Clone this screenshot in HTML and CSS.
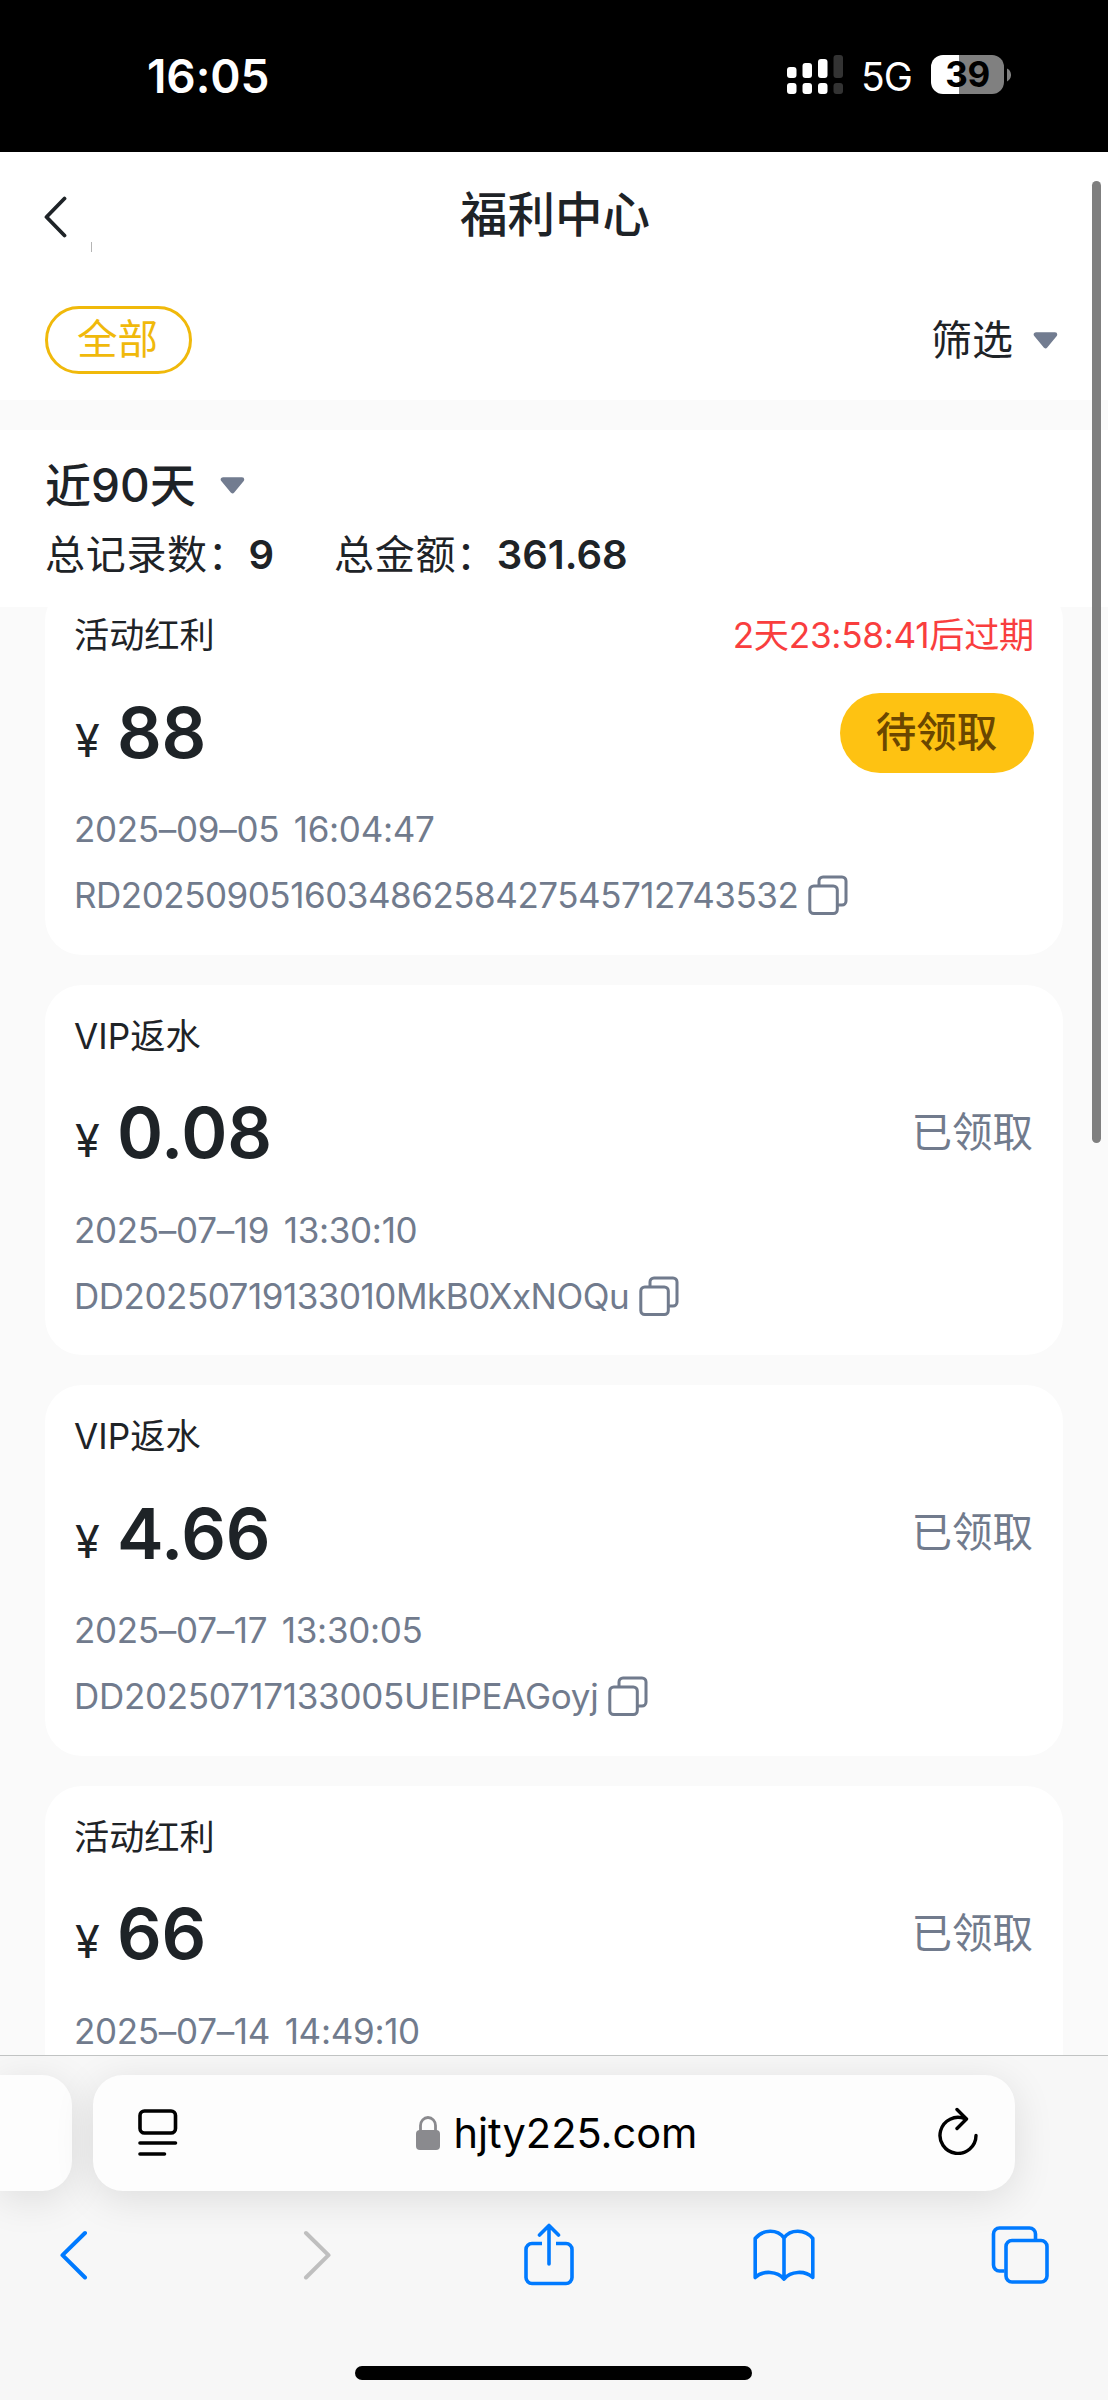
FILE: index.html
```html
<!DOCTYPE html>
<html lang="zh-CN">
<head>
<meta charset="utf-8">
<title>福利中心</title>
<link rel="stylesheet" href="styles.css">
</head>
<body>
<svg class="defs" width="0" height="0">
  <symbol id="copy" viewBox="0 0 40 40">
    <path d="M11 11V6a4 4 0 0 1 4-4h19a4 4 0 0 1 4 4v20a4 4 0 0 1-4 4h-4" fill="none" stroke="currentColor" stroke-width="3"/>
    <rect x="1.8" y="11" width="27.5" height="27.5" rx="4" fill="none" stroke="currentColor" stroke-width="3"/>
  </symbol>
  <symbol id="caret" viewBox="0 0 25 17">
    <path d="M3 2.5h19L12.5 14z" fill="currentColor" stroke="currentColor" stroke-width="4.5" stroke-linejoin="round"/>
  </symbol>
</svg>
<div class="screen">
  <header class="status">
    <span class="clock">16:05</span>
    <div class="indicators">
      <svg class="signal" width="56" height="40" viewBox="0 0 56 40">
        <g fill="#fff">
          <rect x="0" y="12" width="9.5" height="11" rx="3"/><rect x="15.5" y="8" width="9.5" height="15" rx="3"/><rect x="31" y="4" width="9.5" height="19" rx="3"/>
          <rect x="0" y="28" width="9.5" height="11" rx="3"/><rect x="15.5" y="28" width="9.5" height="11" rx="3"/><rect x="31" y="28" width="9.5" height="11" rx="3"/>
        </g>
        <g fill="#333"><rect x="46.5" y="0" width="9.5" height="23" rx="3"/><rect x="46.5" y="28" width="9.5" height="11" rx="3"/></g>
      </svg>
      <span class="network">5G</span>
      <div class="battery"><span class="level">39</span></div>
      <svg class="nub" width="4" height="14" viewBox="0 0 4 14"><path d="M0 0.5C5.4 3 5.4 11 0 13.5z" fill="#808080"/></svg>
    </div>
  </header>

  <main class="page">
    <div class="titlebar">
      <svg class="back" width="24" height="42" viewBox="0 0 24 42"><path d="M20.5 2.5L2.5 21l18 18.5" fill="none" stroke="#1e2327" stroke-width="3.8" stroke-linecap="round" stroke-linejoin="round"/></svg>
      <i class="tick"></i>
      <h1>福利中心</h1>
    </div>
    <div class="tabs">
      <button class="chip">全部</button>
      <div class="filter"><span>筛选</span><svg class="caret" width="25" height="17"><use href="#caret"/></svg></div>
    </div>
    <section class="summary">
      <div class="range"><span>近90天</span><svg class="caret" width="25" height="17"><use href="#caret"/></svg></div>
      <div class="totals"><span class="count">总记录数：<b>9</b></span><span class="sum">总金额：<b>361.68</b></span></div>
    </section>
    <section class="list">
      <article class="card">
        <div class="head"><span>活动红利</span><span class="expire">2天23:58:41后过期</span></div>
        <div class="amount"><span class="money"><span class="yen">¥</span><strong>88</strong></span><button class="claim">待领取</button></div>
        <div class="time">2025–09–05 16:04:47</div>
        <div class="order"><span>RD202509051603486258427545712743532</span><svg width="40" height="40"><use href="#copy"/></svg></div>
      </article>
      <article class="card">
        <div class="head"><span>VIP返水</span></div>
        <div class="amount"><span class="money"><span class="yen">¥</span><strong>0.08</strong></span><span class="done">已领取</span></div>
        <div class="time">2025–07–19 13:30:10</div>
        <div class="order"><span>DD20250719133010MkB0XxNOQu</span><svg width="40" height="40"><use href="#copy"/></svg></div>
      </article>
      <article class="card">
        <div class="head"><span>VIP返水</span></div>
        <div class="amount"><span class="money"><span class="yen">¥</span><strong>4.66</strong></span><span class="done">已领取</span></div>
        <div class="time">2025–07–17 13:30:05</div>
        <div class="order order-wide"><span>DD20250717133005UEIPEAGoyj</span><svg width="40" height="40"><use href="#copy"/></svg></div>
      </article>
      <article class="card">
        <div class="head"><span>活动红利</span></div>
        <div class="amount"><span class="money"><span class="yen">¥</span><strong>66</strong></span><span class="done">已领取</span></div>
        <div class="time">2025–07–14 14:49:10</div>
      </article>
    </section>
    <i class="scrollbar"></i>
  </main>

  <footer class="browser">
    <div class="address-row">
      <div class="prev-tab"></div>
      <div class="address">
        <svg width="40" height="48" viewBox="0 0 40 48" fill="none" stroke="#000" stroke-width="3.6" stroke-linecap="round"><rect x="2" y="2" width="35.5" height="22" rx="4.5"/><path d="M2 34h35.5M2 45h24.5"/></svg>
        <div class="host">
          <svg width="24" height="34" viewBox="0 0 24 34"><path d="M4.5 16V9.5a7.5 8 0 0 1 15 0V16" fill="none" stroke="#8a8a8e" stroke-width="2.8"/><rect x="0" y="14" width="24" height="20" rx="4" fill="#8a8a8e"/></svg>
          <span>hjty225.com</span>
        </div>
        <svg class="reload" width="40" height="48" viewBox="0 0 40 48" fill="none" stroke="#000" stroke-width="3.4" stroke-linecap="round" stroke-linejoin="round"><path d="M38 28.500A18 18 0 1 1 27 11.800M19 2.500l9.500 9.500-9.500 9.500"/></svg>
      </div>
    </div>
    <nav class="tools">
      <svg class="prev" width="28" height="50" viewBox="0 0 28 50"><path d="M25 3L2.5 25.2 25 47.5" fill="none" stroke="#007aff" stroke-width="4" stroke-linecap="round" stroke-linejoin="round"/></svg>
      <svg class="forward" width="28" height="50" viewBox="0 0 28 50"><path d="M3 3l22.500 22.200L3 47.500" fill="none" stroke="#bfbfbf" stroke-width="4" stroke-linecap="round" stroke-linejoin="round"/></svg>
      <svg class="share" width="50" height="64" viewBox="0 0 50 64" fill="none" stroke="#007aff" stroke-width="3.6"><path d="M18 20.500H8a6 6 0 0 0-6 6v28a6 6 0 0 0 6 6h34a6 6 0 0 0 6-6v-28a6 6 0 0 0-6-6H32"/><path d="M25 41V3M15.500 12L25 2.500l9.500 9.500" stroke-linecap="round" stroke-linejoin="round"/></svg>
      <svg width="62" height="54" viewBox="0 0 62 54" fill="none" stroke="#007aff" stroke-width="3.6" stroke-linecap="round" stroke-linejoin="round"><path d="M31 10v41C24.500 43 10 42 2.200 49.500V10.500C10 1 24.500 1 31 10C37.500 1 52 1 59.800 10.500V49.500C52 42 37.500 43 31 51"/></svg>
      <svg width="58" height="58" viewBox="0 0 58 58" fill="none" stroke="#007aff" stroke-width="3.6"><path d="M13.500 45H8.500a6 6 0 0 1-6-6V8a6 6 0 0 1 6-6h30a6 6 0 0 1 6 6v5"/><rect x="15" y="14.500" width="41" height="41.500" rx="6"/></svg>
    </nav>
    <i class="home"></i>
  </footer>
</div>
</body>
</html>
```
FILE: styles.css
```css
* { box-sizing: border-box; margin: 0; padding: 0; }
body { font-family: Inter, "Noto Sans CJK SC", sans-serif; color: #1e2327; background: #fafafa; }
button { font: inherit; background: none; border: 0; }
svg { display: block; flex: none; }
.defs { position: absolute; }
.screen { width: 1108px; height: 2400px; display: flex; flex-direction: column; overflow: hidden; }

.status { height: 152px; flex: none; background: #000; color: #fff; display: flex; justify-content: space-between; padding: 55px 97px 0 147px; }
.clock { font-size: 46px; font-weight: 600; line-height: 42px; letter-spacing: -0.1px; }
.indicators { display: flex; height: 39px; align-items: center; }
.signal { margin-right: 18px; }
.network { width: 70px; font-size: 39px; line-height: 40px; letter-spacing: -1px; font-weight: 400; padding-top: 4px; }
.battery { width: 73px; height: 39px; border-radius: 12px; background: linear-gradient(90deg, #fff 28.5px, #808080 28.5px); display: flex; justify-content: center; }
.level { color: #000; font-size: 35px; font-weight: 700; line-height: 39px; letter-spacing: -0.5px; }
.nub { margin-left: 3px; }

.page { height: 1903px; flex: none; position: relative; overflow: hidden; display: flex; flex-direction: column; }
.titlebar { height: 126px; flex: none; background: #fff; position: relative; display: grid; place-items: center; padding-left: 2px; }
.back { position: absolute; left: 44px; top: 44px; }
.tick { position: absolute; left: 91px; top: 90px; width: 1px; height: 10px; background: #b5b5b5; }
h1 { font-size: 47.5px; font-weight: 500; line-height: 60px; }
.tabs { height: 122px; flex: none; background: #fff; display: flex; justify-content: space-between; padding: 28px 50px 0 45px; }
.chip { width: 147px; height: 68px; border: 3px solid #f0b90b; border-radius: 34px; color: #f0b90b; font-size: 40.5px; line-height: 60px; padding-right: 2px; }
.filter { height: 68px; display: flex; align-items: center; gap: 20px; font-size: 41px; line-height: 66px; }
.caret { color: #727c90; }
.summary { height: 177px; flex: none; margin-top: 30px; background: #fff; padding: 25px 45px 0; position: relative; z-index: 1; }
.range { display: flex; align-items: center; gap: 24px; height: 60px; font-size: 46px; font-weight: 500; line-height: 60px; }
.totals { display: flex; margin-top: 10px; font-size: 40px; line-height: 60px; letter-spacing: 0.7px; }
.totals b { font-weight: 600; letter-spacing: 0; }
.count { width: 289px; }

.list { margin-top: -23px; padding: 0 45px; display: flex; flex-direction: column; gap: 30px; }
.card { height: 370.5px; flex: none; background: #fff; border-radius: 37px; padding: 29px 29px 0; }
.head { height: 44px; display: flex; justify-content: space-between; font-size: 35.2px; line-height: 45px; }
.expire { color: #f93e3e; letter-spacing: -0.3px; }
.amount { height: 80px; margin-top: 36px; display: flex; justify-content: space-between; align-items: center; }
.money { line-height: 78px; padding-top: 18px; }
.yen { display: inline-block; width: 43px; padding-left: 1px; font-size: 45px; line-height: 60px; vertical-align: 1px; }
.money strong { font-size: 70px; font-weight: 600; letter-spacing: -0.2px; }
.claim { width: 194px; height: 80px; border-radius: 40px; background: #fec212; color: #6b4700; font-size: 40.5px; font-weight: 500; line-height: 76px; padding-right: 1px; }
.done { color: #717b8d; font-size: 40.5px; line-height: 76px; padding: 0 1px 2px 0; }
.time { margin-top: 34px; font-size: 35px; line-height: 44px; color: #717b8d; letter-spacing: -0.3px; word-spacing: 5px; }
.order { margin-top: 22px; height: 44px; display: flex; align-items: center; gap: 10px; font-size: 35px; line-height: 44px; letter-spacing: -0.48px; color: #717b8d; }
.order-wide { letter-spacing: -0.3px; }
.scrollbar { position: absolute; z-index: 2; left: 1092px; top: 29px; width: 9px; height: 962px; border-radius: 5px; background: #7f7f7f; }

.browser { height: 345px; flex: none; position: relative; border-top: 1px solid #c1c3c3; background: #f7f7f7; overflow: hidden; }
.address-row { display: flex; gap: 21px; padding-top: 19px; }
.prev-tab, .address { height: 116px; background: #fdfdfd; box-shadow: 0 8px 40px rgba(0, 0, 0, .11); }
.prev-tab { width: 72px; border-radius: 0 30px 30px 0; }
.address { width: 922px; border-radius: 30px; display: flex; align-items: center; justify-content: space-between; padding: 0 37px 0 45px; }
.host { display: flex; align-items: center; gap: 14px; margin-right: 3px; font-size: 41.5px; line-height: 50px; color: #000; }
.reload { margin-bottom: 4px; }
.tools { display: grid; grid-template-columns: repeat(5, 236px); place-items: center; margin: 31px 0 0 -42px; height: 66px; }
.prev { margin-right: 4px; }
.forward { margin-left: 10px; }
.share { margin-left: 2px; }
.home { position: absolute; left: 355px; top: 310px; width: 397px; height: 14px; border-radius: 7px; background: #000; }
```
